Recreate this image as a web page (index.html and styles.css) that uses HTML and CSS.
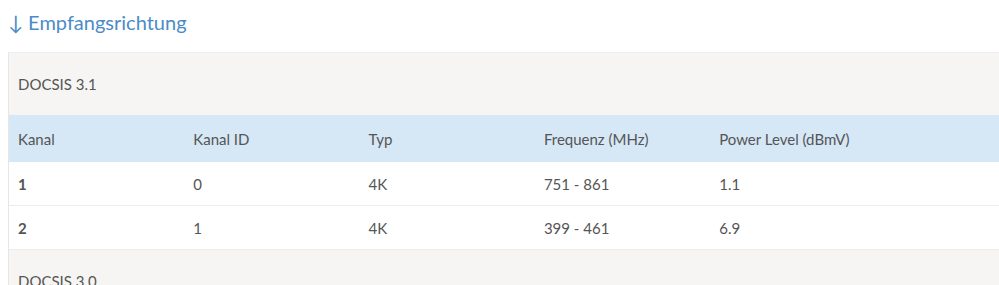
FILE: index.html
```html
<!DOCTYPE html>
<html lang="de">
<head>
<meta charset="utf-8">
<link rel="stylesheet" href="styles.css">
</head>
<body>
<h2 class="title">↓ Empfangsrichtung</h2>
<div class="panel">
  <div class="panel-head">DOCSIS 3.1</div>
  <div class="table">
    <div class="row head">
      <div class="cell">Kanal</div>
      <div class="cell">Kanal ID</div>
      <div class="cell">Typ</div>
      <div class="cell">Frequenz (MHz)</div>
      <div class="cell">Power Level (dBmV)</div>
      <div class="cell"></div>
    </div>
    <div class="row">
      <div class="cell strong">1</div>
      <div class="cell">0</div>
      <div class="cell">4K</div>
      <div class="cell">751 - 861</div>
      <div class="cell">1.1</div>
      <div class="cell"></div>
    </div>
    <div class="row">
      <div class="cell strong">2</div>
      <div class="cell">1</div>
      <div class="cell">4K</div>
      <div class="cell">399 - 461</div>
      <div class="cell">6.9</div>
      <div class="cell"></div>
    </div>
  </div>
  <div class="panel-head">DOCSIS 3.0</div>
</div>
</body>
</html>
```

FILE: styles.css
```css
html, body {
  margin: 0;
  padding: 0;
  background: #ffffff;
}
body {
  padding: 0 0 0 8px;
  font-family: Lato, "Liberation Sans", sans-serif;
  color: #555555;
  overflow: hidden;
  width: 991px;
  height: 285px;
}
.title {
  margin: 0;
  padding-top: 9px;
  height: 52px;
  box-sizing: border-box;
  font-size: 20px;
  font-weight: 400;
  color: #4b8bc8;
  line-height: 26px;
}
.panel {
  border-left: 1px solid #e6e6e6;
  border-top: 1px solid #efefef;
  width: 1100px;
}
.panel-head {
  background: #f6f5f3;
  height: 62px;
  line-height: 62px;
  padding-left: 9px;
  font-size: 15px;
}
.table {
  display: flex;
  flex-direction: column;
}
.row {
  display: grid;
  grid-template-columns: repeat(5, 175.3px) 1fr;
  height: 43px;
  align-items: center;
  border-bottom: 1px solid #ececec;
  font-size: 15px;
}
.row.head {
  background: #d6e7f6;
  height: 47px;
  border-bottom: 0;
}
.cell {
  padding-left: 9px;
}
.strong {
  font-weight: 700;
}
```
